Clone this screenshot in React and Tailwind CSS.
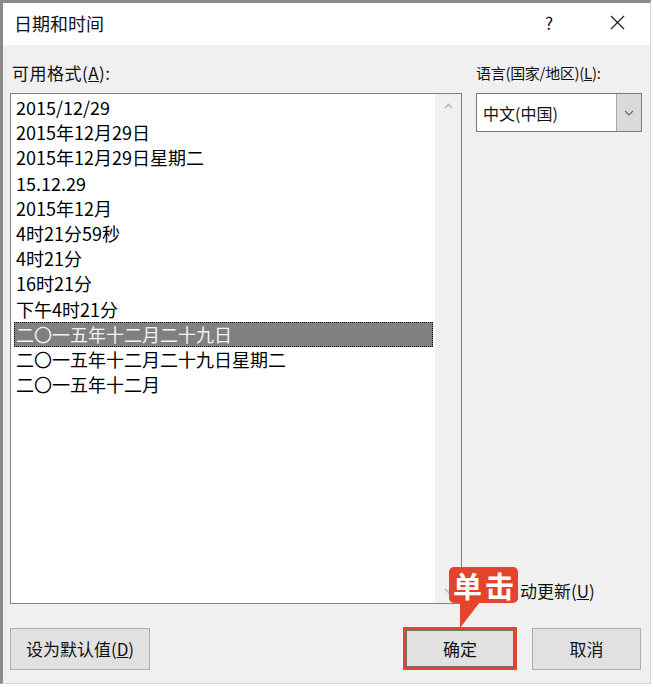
import React from "react";

const rows = [
  "2015/12/29",
  "2015年12月29日",
  "2015年12月29日星期二",
  "15.12.29",
  "2015年12月",
  "4时21分59秒",
  "4时21分",
  "16时21分",
  "下午4时21分",
  "二〇一五年十二月二十九日",
  "二〇一五年十二月二十九日星期二",
  "二〇一五年十二月",
];

export default function App() {
  return (
    <div className="relative w-[653px] h-[687px] bg-white font-['Noto_Sans_CJK_SC',sans-serif] text-[#111]">
      <div className="w-[651px] h-[684px] border-t-[3px] border-l-[3px] border-t-[#8a8a8a] border-l-[#8a8a8a] border-r border-b border-r-[#d6d6d6] border-b-[#d6d6d6] flex flex-col">
        {/* title bar */}
        <div className="h-[42px] bg-white flex items-center pl-[11px] pb-[3px] shrink-0">
          <span className="text-[18px] leading-none">日期和时间</span>
          <div className="ml-auto flex items-center mr-[13px]">
            <span className="w-[40px] text-center text-[17px] leading-none">?</span>
            <span className="w-[40px] ml-[28px] flex justify-center">
              <svg width="15" height="15" viewBox="0 0 15 15">
                <path d="M1 1 L14 14 M14 1 L1 14" stroke="#222" strokeWidth="1.3" fill="none" />
              </svg>
            </span>
          </div>
        </div>

        {/* body */}
        <div className="flex-1 bg-[#f0f0f0] flex flex-col pl-[7px] pr-[8px] pt-[18px] pb-[13px]">
          <div className="flex flex-1">
            {/* left column */}
            <div className="w-[452px] flex flex-col">
              <div className="h-[20px] pl-[2px] text-[17px] tracking-[0.5px] leading-[20px]">
                可用格式(<span className="underline">A</span>):
              </div>
              <div className="mt-[10px] h-[511px] border border-[#828282] bg-white flex">
                <div className="flex-1 pt-[1px] pl-[3px] pr-[2px]">
                  {rows.map((r, i) =>
                    i === 9 ? (
                      <div
                        key={i}
                        className="h-[25.2px] bg-[#808080] border border-dotted border-black text-[#f4f4f4] text-[18px] leading-[23px] pl-[1px] whitespace-nowrap"
                      >
                        {r}
                      </div>
                    ) : (
                      <div
                        key={i}
                        className="h-[25.2px] text-[18px] leading-[25px] pl-[2px] whitespace-nowrap text-black"
                      >
                        {r}
                      </div>
                    )
                  )}
                </div>
                <div className="w-[26px] bg-[#f0f0f0] flex flex-col items-center justify-between pt-[9px] pb-[9px]">
                  <svg width="9" height="6" viewBox="0 0 9 6">
                    <path d="M1 5 L4.5 1.5 L8 5" stroke="#b8b8b8" strokeWidth="1.6" fill="none" />
                  </svg>
                  <svg width="9" height="6" viewBox="0 0 9 6">
                    <path d="M1 1 L4.5 4.5 L8 1" stroke="#b8b8b8" strokeWidth="1.6" fill="none" />
                  </svg>
                </div>
              </div>
            </div>

            {/* right column */}
            <div className="ml-[14px] w-[166px] flex flex-col">
              <div className="h-[20px] text-[15px] tracking-[-0.3px] leading-[20px] whitespace-nowrap">
                语言(国家/地区)(<span className="underline">L</span>):
              </div>
              <div className="mt-[10px] h-[39px] border border-[#7a7a7a] bg-white flex">
                <div className="flex-1 flex items-center pl-[6px] text-[16px]">中文(中国)</div>
                <div className="w-[25px] bg-[#dadada] border-l border-[#a8a8a8] flex items-center justify-center">
                  <svg width="10" height="6" viewBox="0 0 10 6">
                    <path d="M1 1 L5 5 L9 1" stroke="#666" strokeWidth="1.2" fill="none" />
                  </svg>
                </div>
              </div>
              <div className="flex-1" />
              <div className="h-[22px] mb-[3px] flex items-center">
                <div className="ml-[7px] w-[14px] h-[14px] border border-[#333] bg-white" />
                <span className="ml-[6px] text-[17px] leading-none whitespace-nowrap">
                  自动更新(<span className="underline">U</span>)
                </span>
              </div>
            </div>
          </div>

          {/* buttons */}
          <div className="mt-[23px] flex items-end">
            <button className="w-[140px] h-[42px] bg-[#e1e1e1] border border-[#adadad] text-[17px] flex items-center justify-center">
              设为默认值(<span className="underline">D</span>)
            </button>
            <div className="ml-auto flex items-end mr-[1px]">
              <button className="w-[114px] h-[43px] border-[3px] border-[#e4432d] bg-[#e1e1e1] flex">
                <span className="flex-1 border border-[#707070] flex items-center justify-center text-[17px]">
                  确定
                </span>
              </button>
              <button className="ml-[15px] w-[109px] h-[42px] bg-[#e1e1e1] border border-[#adadad] text-[17px] flex items-center justify-center">
                取消
              </button>
            </div>
          </div>
        </div>
      </div>

      {/* callout */}
      <div className="absolute left-[449px] top-[567px] w-[69px] h-[36px] bg-[#e5432c] rounded-[5px] flex items-center justify-center text-white font-bold text-[29px] leading-none tracking-[3px] pl-[3px]">
        单击
        <svg className="absolute left-[10px] top-[35px]" width="22" height="27" viewBox="0 0 22 27">
          <path d="M1 0 L21 0 L1 26 Z" fill="#e5432c" />
        </svg>
      </div>
    </div>
  );
}
